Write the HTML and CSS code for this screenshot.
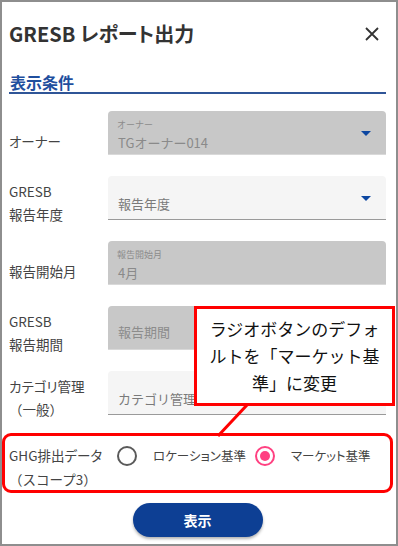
FILE: index.html
```html
<!DOCTYPE html>
<html lang="ja">
<head>
    <meta charset="utf-8">
    <link rel="stylesheet" href="styles.css">
</head>
<body>
    <div class="dialog">
        <div class="dialog-header">
            <h1 class="dialog-title">GRESB レポート出力</h1>
            <svg class="close-icon" width="16" height="16" viewBox="0 0 16 16">
                <path d="M2 2 L14 14 M14 2 L2 14" stroke="#333" stroke-width="1.8" fill="none"/>
            </svg>
        </div>

        <h2 class="section-title">表示条件</h2>

        <div class="form">
            <div class="form-row">
                <div class="row-label single">オーナー</div>
                <div class="field disabled">
                    <span class="field-caption">オーナー</span>
                    <span class="field-value">TGオーナー014</span>
                    <span class="select-arrow"></span>
                </div>
            </div>
            <div class="form-row">
                <div class="row-label">GRESB<br>報告年度</div>
                <div class="field">
                    <span class="field-placeholder">報告年度</span>
                    <span class="select-arrow"></span>
                </div>
            </div>
            <div class="form-row">
                <div class="row-label single">報告開始月</div>
                <div class="field disabled">
                    <span class="field-caption">報告開始月</span>
                    <span class="field-value">4月</span>
                </div>
            </div>
            <div class="form-row">
                <div class="row-label">GRESB<br>報告期間</div>
                <div class="field disabled">
                    <span class="field-placeholder">報告期間</span>
                </div>
            </div>
            <div class="form-row">
                <div class="row-label">カテゴリ管理<br><span class="paren">（一般）</span></div>
                <div class="field">
                    <span class="field-placeholder">カテゴリ管理</span>
                </div>
            </div>
        </div>

        <div class="radio-row">
            <div class="row-label">GHG排出データ<br><span class="paren">（スコープ3）</span></div>
            <label class="radio-option">
                <span class="radio"></span>
                <span class="radio-text">ロケーション基準</span>
            </label>
            <label class="radio-option">
                <span class="radio checked"></span>
                <span class="radio-text">マーケット基準</span>
            </label>
        </div>

        <div class="actions">
            <button class="primary-btn">表示</button>
        </div>

        <!-- annotation callout -->
        <div class="callout">ラジオボタンのデフォ<br>ルトを「マーケット基<br>準」に変更</div>
        <svg class="callout-line" width="40" height="34" viewBox="0 0 40 34">
            <line x1="31" y1="0" x2="2" y2="31" stroke="#ff0000" stroke-width="3"/>
        </svg>
    </div>
</body>
</html>
```

FILE: styles.css
```css
* {
    box-sizing: border-box;
}

body {
    margin: 0;
    font-family: "Noto Sans CJK JP", "Noto Sans", sans-serif;
    color: #444;
    background: #fff;
}

.dialog {
    position: relative;
    width: 398px;
    height: 546px;
    border: 2px solid #8e8e8e;
    padding: 0 10px 0 7px;
    overflow: hidden;
}

.dialog-header {
    display: flex;
    align-items: center;
    justify-content: space-between;
    margin-top: 18px;
}

.dialog-title {
    margin: 0;
    font-size: 20px;
    line-height: 28px;
    font-weight: 700;
    color: #333;
    font-feature-settings: "palt";
}

.close-icon {
    margin-right: 6px;
}

.section-title {
    margin: 25px 0 0 0;
    font-size: 16px;
    line-height: 19px;
    font-weight: 700;
    color: #1f4f9e;
    border-bottom: 2px solid #2f5597;
    padding-left: 1px;
}

.form {
    margin-top: 17px;
    display: flex;
    flex-direction: column;
    gap: 21px;
}

.form-row {
    display: flex;
    align-items: center;
    height: 44px;
}

.row-label {
    width: 99px;
    flex-shrink: 0;
    font-size: 13.5px;
    line-height: 23px;
    color: #444;
    padding-top: 10px;
    font-feature-settings: "palt";
    white-space: nowrap;
}

.row-label.single {
    padding-top: 16px;
}

.paren {
    font-feature-settings: normal;
}

.field {
    position: relative;
    flex: 1;
    height: 44px;
    background: #f5f5f5;
    border-bottom: 1px solid #9a9a9a;
    border-radius: 4px 4px 0 0;
    padding-left: 10px;
}

.field.disabled {
    background: #c8c8c8;
    border-bottom: 1px solid #d9d9d9;
}

.field-caption {
    position: absolute;
    left: 9px;
    top: 8px;
    font-size: 9px;
    line-height: 12px;
    color: #8c8c8c;
}

.field-value {
    position: absolute;
    left: 10px;
    top: 23px;
    font-size: 13px;
    line-height: 18px;
    color: #8a8a8a;
}

.field-placeholder {
    position: absolute;
    left: 10px;
    top: 19px;
    font-size: 13px;
    line-height: 18px;
    color: #7a7a7a;
}

.field.disabled .field-placeholder {
    top: 17px;
    color: #8c8c8c;
}

.select-arrow {
    position: absolute;
    right: 15px;
    top: 20px;
    width: 0;
    height: 0;
    border-left: 5px solid transparent;
    border-right: 5px solid transparent;
    border-top: 5px solid #0d47a1;
}

.radio-row {
    position: relative;
    display: flex;
    align-items: flex-start;
    margin-top: 28px;
}

.radio-row::after {
    content: "";
    position: absolute;
    left: -7px;
    top: -10px;
    right: -7px;
    bottom: -2px;
    border: 3px solid #ff0000;
    border-radius: 9px;
}

.radio-row .row-label {
    padding-top: 0;
    line-height: 24px;
    width: 108px;
}

.radio-option {
    display: flex;
    align-items: center;
    gap: 16px;
    margin-top: 3px;
    margin-right: 9px;
    white-space: nowrap;
}

.radio {
    width: 20px;
    height: 20px;
    flex-shrink: 0;
    border: 2px solid #5a5a5a;
    border-radius: 50%;
    position: relative;
}

.radio.checked {
    border-color: #ff4081;
}

.radio.checked::after {
    content: "";
    position: absolute;
    left: 3px;
    top: 3px;
    width: 10px;
    height: 10px;
    border-radius: 50%;
    background: #ff4081;
}

.radio-text {
    font-size: 12.5px;
    line-height: 18px;
    color: #444;
    font-feature-settings: "palt";
}

.actions {
    display: flex;
    justify-content: center;
    margin-top: 12px;
}

.primary-btn {
    width: 130px;
    height: 34px;
    border: none;
    border-radius: 17px;
    background: #0d3f94;
    color: #fff;
    font-family: inherit;
    font-size: 14px;
    font-weight: 700;
    box-shadow: 0 2px 3px rgba(0, 0, 0, 0.3);
}

.callout {
    position: absolute;
    left: 192px;
    top: 304px;
    width: 201px;
    height: 100px;
    border: 3px solid #ff0000;
    background: #fff;
    color: #111;
    font-size: 17px;
    line-height: 27px;
    text-align: center;
    padding-top: 6px;
}

.callout-line {
    position: absolute;
    left: 214px;
    top: 403px;
}
```
